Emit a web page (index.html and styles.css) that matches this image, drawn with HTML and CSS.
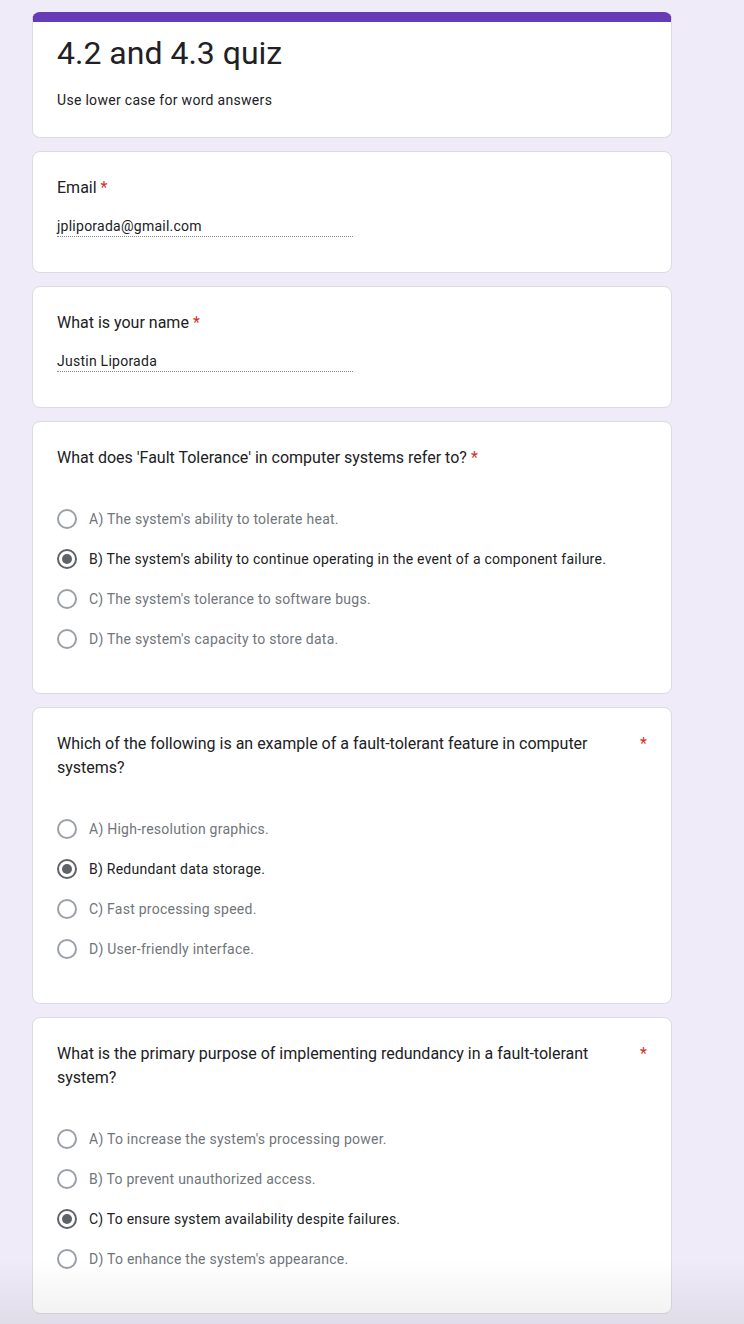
FILE: index.html
```html
<!DOCTYPE html>
<html lang="en">
<head>
<meta charset="utf-8">
<title>4.2 and 4.3 quiz</title>
<link rel="stylesheet" href="styles.css">
</head>
<body>
<main class="form">
  <section class="card header">
    <h1 class="title">4.2 and 4.3 quiz</h1>
    <p class="desc">Use lower case for word answers</p>
  </section>

  <section class="card">
    <div class="q-title"><span class="q-text">Email</span><span class="req">*</span></div>
    <div class="answer">jpliporada@gmail.com</div>
  </section>

  <section class="card">
    <div class="q-title"><span class="q-text">What is your name</span><span class="req">*</span></div>
    <div class="answer">Justin Liporada</div>
  </section>

  <section class="card">
    <div class="q-title"><span class="q-text">What does 'Fault Tolerance' in computer systems refer to?</span><span class="req">*</span></div>
    <div class="options">
      <div class="opt"><span class="radio"></span><span class="label">A) The system's ability to tolerate heat.</span></div>
      <div class="opt checked"><span class="radio"></span><span class="label">B) The system's ability to continue operating in the event of a component failure.</span></div>
      <div class="opt"><span class="radio"></span><span class="label">C) The system's tolerance to software bugs.</span></div>
      <div class="opt"><span class="radio"></span><span class="label">D) The system's capacity to store data.</span></div>
    </div>
  </section>

  <section class="card">
    <div class="q-title"><span class="q-text">Which of the following is an example of a fault-tolerant feature in computer systems?</span><span class="req">*</span></div>
    <div class="options">
      <div class="opt"><span class="radio"></span><span class="label">A) High-resolution graphics.</span></div>
      <div class="opt checked"><span class="radio"></span><span class="label">B) Redundant data storage.</span></div>
      <div class="opt"><span class="radio"></span><span class="label">C) Fast processing speed.</span></div>
      <div class="opt"><span class="radio"></span><span class="label">D) User-friendly interface.</span></div>
    </div>
  </section>

  <section class="card">
    <div class="q-title"><span class="q-text">What is the primary purpose of implementing redundancy in a fault-tolerant system?</span><span class="req">*</span></div>
    <div class="options">
      <div class="opt"><span class="radio"></span><span class="label">A) To increase the system's processing power.</span></div>
      <div class="opt"><span class="radio"></span><span class="label">B) To prevent unauthorized access.</span></div>
      <div class="opt checked"><span class="radio"></span><span class="label">C) To ensure system availability despite failures.</span></div>
      <div class="opt"><span class="radio"></span><span class="label">D) To enhance the system's appearance.</span></div>
    </div>
  </section>
</main>
<div class="fade"></div>
</body>
</html>
```

FILE: styles.css
```css
html, body {
  margin: 0;
  padding: 0;
}
body {
  background: #efebf8;
  font-family: Roboto, "Liberation Sans", Arial, sans-serif;
  color: #202124;
  height: 1324px;
  overflow: hidden;
}
.form {
  width: 640px;
  padding: 12px 0 0 32px;
  display: flex;
  flex-direction: column;
  gap: 13px;
}
.card {
  background: #fff;
  border: 1px solid #dadce0;
  border-radius: 8px;
  padding: 24px 24px 34px;
  box-sizing: border-box;
}
.header {
  border-top: 10px solid #673ab7;
  padding-top: 11px;
  padding-bottom: 27px;
}
.title {
  margin: 0;
  font-size: 32px;
  font-weight: 400;
  line-height: 40px;
  color: #202124;
}
.desc {
  margin: 17px 0 0;
  font-size: 14px;
  line-height: 20px;
  letter-spacing: 0.3px;
  color: #202124;
}
.q-title {
  display: flex;
  font-size: 16px;
  line-height: 24px;
  color: #202124;
}
.req {
  color: #d93025;
  padding-left: 4px;
}
.answer {
  margin: 16px 0 1px;
  width: 296px;
  font-size: 14px;
  line-height: 20px;
  letter-spacing: 0.25px;
  border-bottom: 1px dotted #8a8a8a;
  color: #202124;
}
.options {
  margin-top: 29px;
  display: flex;
  flex-direction: column;
}
.opt {
  height: 40px;
  display: flex;
  align-items: center;
  gap: 12px;
  font-size: 14px;
  letter-spacing: 0.25px;
  color: #70757a;
}
.radio {
  width: 20px;
  height: 20px;
  box-sizing: border-box;
  border: 2px solid #9aa0a6;
  border-radius: 50%;
  display: flex;
  align-items: center;
  justify-content: center;
  flex: none;
}
.opt.checked {
  color: #202124;
}
.opt.checked .radio {
  border-color: #5f6368;
}
.opt.checked .radio::after {
  content: "";
  width: 10px;
  height: 10px;
  border-radius: 50%;
  background: #5f6368;
}
.fade {
  position: fixed;
  left: 0;
  right: 0;
  bottom: 0;
  height: 64px;
  background: linear-gradient(to bottom, rgba(0,0,0,0), rgba(0,0,0,0.06));
  pointer-events: none;
}
```
